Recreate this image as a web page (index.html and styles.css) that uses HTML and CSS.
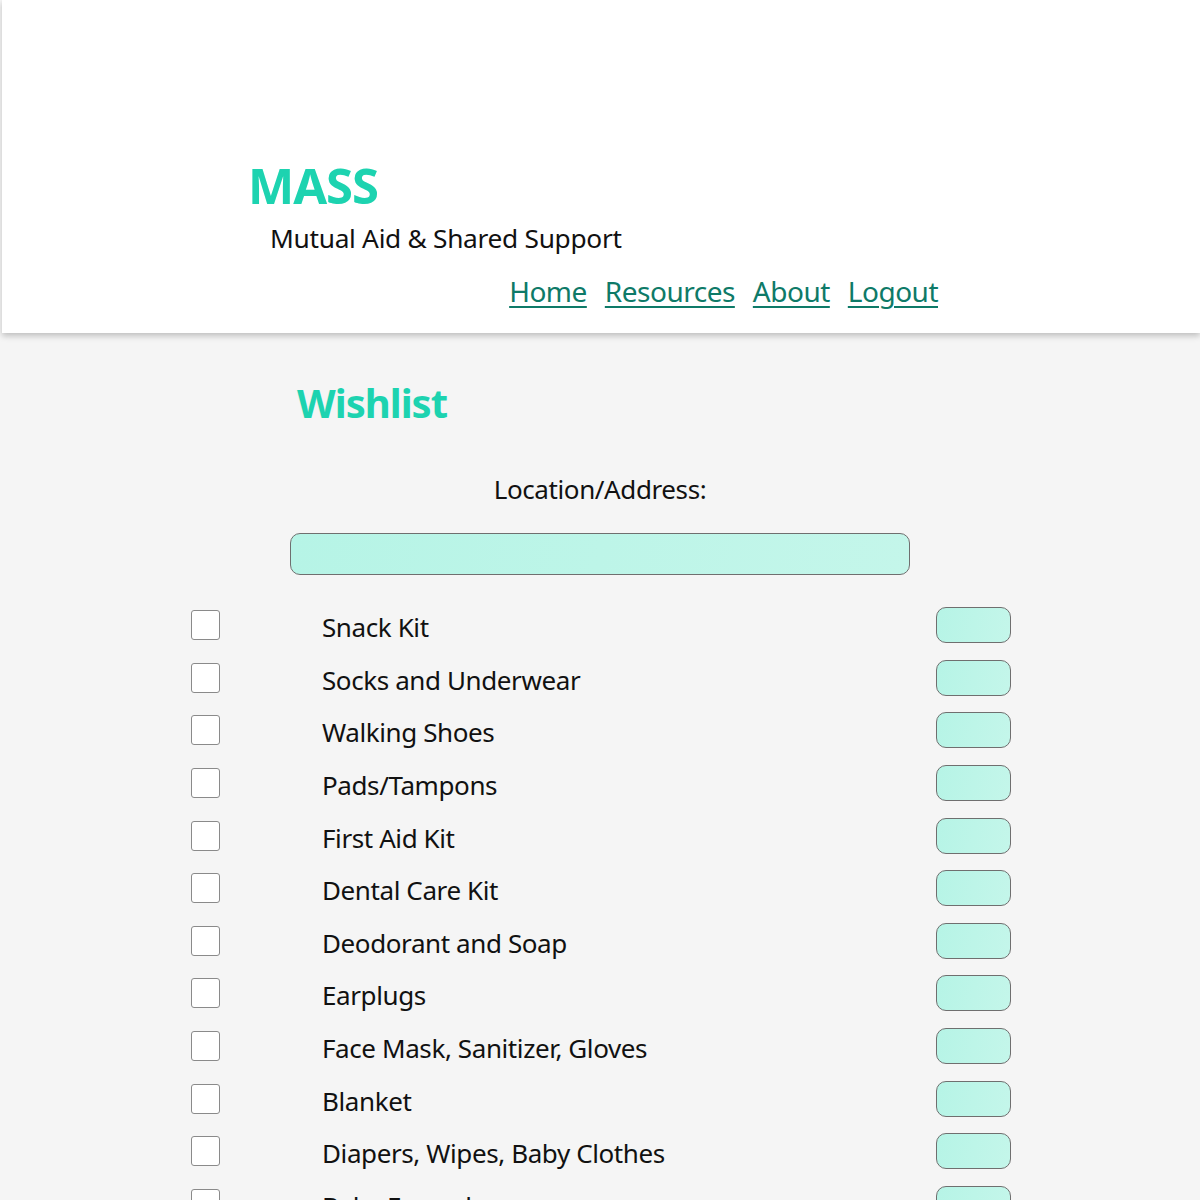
FILE: index.html
```html
<!DOCTYPE html>
<html>
<head>
<meta charset="utf-8">
<title>MASS - Wishlist</title>
<link rel="stylesheet" href="styles.css">
</head>
<body>
<header class="site-header">
  <div class="header-inner">
    <h1 class="brand">MASS</h1>
    <p class="tagline">Mutual Aid &amp; Shared Support</p>
    <nav class="nav">
      <a href="#">Home</a>
      <a href="#">Resources</a>
      <a href="#">About</a>
      <a href="#">Logout</a>
    </nav>
  </div>
</header>
<main class="main">
  <h2 class="page-title">Wishlist</h2>
  <label class="loc-label" for="loc">Location/Address:</label>
  <input class="loc-input" id="loc" type="text">
  <ul class="items">
    <li class="item"><input type="checkbox" class="cb"><span class="name">Snack Kit</span><input class="qty" type="text"></li>
    <li class="item"><input type="checkbox" class="cb"><span class="name">Socks and Underwear</span><input class="qty" type="text"></li>
    <li class="item"><input type="checkbox" class="cb"><span class="name">Walking Shoes</span><input class="qty" type="text"></li>
    <li class="item"><input type="checkbox" class="cb"><span class="name">Pads/Tampons</span><input class="qty" type="text"></li>
    <li class="item"><input type="checkbox" class="cb"><span class="name">First Aid Kit</span><input class="qty" type="text"></li>
    <li class="item"><input type="checkbox" class="cb"><span class="name">Dental Care Kit</span><input class="qty" type="text"></li>
    <li class="item"><input type="checkbox" class="cb"><span class="name">Deodorant and Soap</span><input class="qty" type="text"></li>
    <li class="item"><input type="checkbox" class="cb"><span class="name">Earplugs</span><input class="qty" type="text"></li>
    <li class="item"><input type="checkbox" class="cb"><span class="name">Face Mask, Sanitizer, Gloves</span><input class="qty" type="text"></li>
    <li class="item"><input type="checkbox" class="cb"><span class="name">Blanket</span><input class="qty" type="text"></li>
    <li class="item"><input type="checkbox" class="cb"><span class="name">Diapers, Wipes, Baby Clothes</span><input class="qty" type="text"></li>
    <li class="item"><input type="checkbox" class="cb"><span class="name">Baby Formula</span><input class="qty" type="text"></li>
  </ul>
</main>
</body>
</html>
```
FILE: styles.css
```css
* { box-sizing: border-box; }
html, body {
  margin: 0;
  padding: 0;
}
body {
  background: #f5f5f5;
  font-family: "Noto Sans", "Open Sans", sans-serif;
  color: #111;
}
.site-header {
  background: #ffffff;
  margin-left: 2px;
  height: 333px;
  box-shadow: 0 3px 6px rgba(0,0,0,0.22);
  position: relative;
  z-index: 1;
  padding-top: 155px;
}
.header-inner {
  width: 690px;
  margin-left: 246px;
}
.brand {
  margin: 0;
  font-size: 49px;
  line-height: 60px;
  font-weight: 700;
  color: #1dd3b0;
  letter-spacing: -1px;
}
.tagline {
  margin: 3px 0 0 22px;
  font-size: 26.3px;
  line-height: 40px;
  color: #111;
  letter-spacing: -0.3px;
}
.nav {
  display: flex;
  justify-content: flex-end;
  gap: 18px;
  margin-top: 13px;
}
.nav a {
  color: #0e7a68;
  font-size: 28px;
  line-height: 40px;
  text-decoration: underline;
  text-decoration-thickness: 2px;
  text-underline-offset: 4px;
  letter-spacing: -0.5px;
}
.main {
  padding-top: 42px;
}
.page-title {
  margin: 0 0 0 297px;
  font-size: 40px;
  line-height: 56px;
  font-weight: 700;
  color: #1dd3b0;
  letter-spacing: -1px;
}
.loc-label {
  display: block;
  text-align: center;
  font-size: 26px;
  line-height: 40px;
  margin-top: 38px;
  letter-spacing: -0.4px;
}
.loc-input {
  display: block;
  width: 620px;
  height: 42px;
  margin: 24px auto 0;
  border: 1px solid #6f6f6f;
  border-radius: 10px;
  background: linear-gradient(100deg, #b6f4e6, #c4f6ea);
}
.items {
  list-style: none;
  margin: 24px 0 0 191px;
  padding: 0;
  width: 820px;
}
.item {
  display: flex;
  align-items: center;
  height: 52.6px;
}
.cb {
  appearance: none;
  -webkit-appearance: none;
  width: 29px;
  height: 30px;
  margin: 0;
  border: 1.5px solid #8a8a8a;
  border-radius: 3px;
  background: #ffffff;
  flex: none;
}
.name {
  margin-left: 102px;
  padding-top: 4px;
  font-size: 26px;
  line-height: 40px;
  flex: 1;
  letter-spacing: -0.4px;
}
.qty {
  width: 75px;
  height: 36px;
  margin: 0;
  border: 1px solid #6f6f6f;
  border-radius: 10px;
  background: linear-gradient(100deg, #b6f4e6, #c4f6ea);
  flex: none;
}
```
